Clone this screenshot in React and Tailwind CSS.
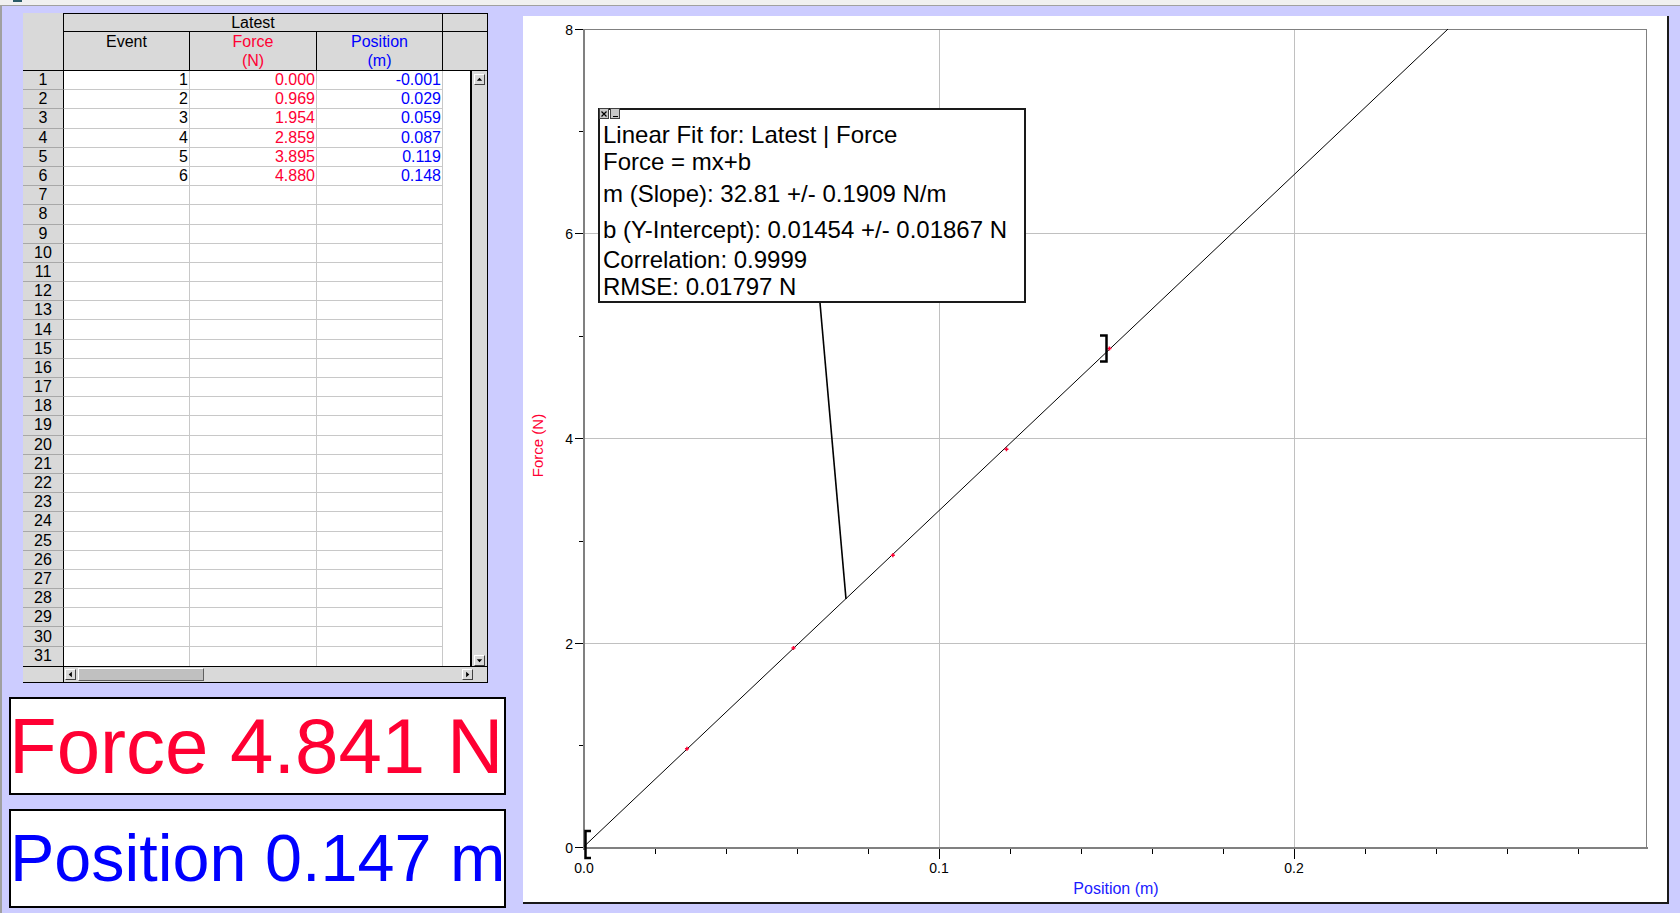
import React from "react";

const RED = "#ff0033";

const DATA = [
  [1, "0.000", "-0.001"],
  [2, "0.969", "0.029"],
  [3, "1.954", "0.059"],
  [4, "2.859", "0.087"],
  [5, "3.895", "0.119"],
  [6, "4.880", "0.148"],
];

function ArrowBtn({ dir }) {
  const d = {
    up: "M2 6.5 L5 3 L8 6.5 Z",
    down: "M2 3.5 L5 7 L8 3.5 Z",
    left: "M6.5 2 L3 5 L6.5 8 Z",
    right: "M3.5 2 L7 5 L3.5 8 Z",
  }[dir];
  return (
    <div className="w-[11px] h-[11px] shrink-0 bg-[#d9d9d9] border border-t-white border-l-white border-r-[#404040] border-b-[#404040] flex items-center justify-center">
      <svg width="9" height="9" viewBox="0 0 10 10">
        <path d={d} fill="black" />
      </svg>
    </div>
  );
}

function Table() {
  const rows = Array.from({ length: 31 }, (_, i) => i + 1);
  return (
    <div className="ml-[21px] mt-[7px] w-[465px] h-[670px] flex flex-col bg-[#d9d9d9] border-r border-b border-black text-[16px] text-black">
      {/* header */}
      <div className="flex h-[58px] border-b border-black shrink-0">
        <div className="w-[41px] border-r border-black" />
        <div className="flex-1 flex flex-col">
          <div className="flex h-[20px] border-t border-b border-black">
            <div className="w-[379px] border-r border-black flex items-center justify-center leading-none">
              Latest
            </div>
            <div className="flex-1" />
          </div>
          <div className="flex flex-1 leading-[19px] text-center">
            <div className="w-[126px] border-r border-black">Event</div>
            <div className="w-[127px] border-r border-black text-[#ff0033]">
              <div>Force</div>
              <div>(N)</div>
            </div>
            <div className="w-[126px] border-r border-black text-[#0000ff]">
              <div>Position</div>
              <div>(m)</div>
            </div>
            <div className="flex-1" />
          </div>
        </div>
      </div>
      {/* body */}
      <div className="flex h-[596px] border-b border-black shrink-0">
        <div className="w-[447px] flex flex-col">
          {rows.map((r) => {
            const d = DATA[r - 1];
            const last = r === 31;
            const rb = last ? "" : "border-b border-b-[#c8c8c8] ";
            return (
              <div key={r} className="flex flex-1 min-h-0">
                <div
                  className={
                    "w-[41px] border-r border-black flex items-center justify-center leading-none bg-[#d9d9d9] " +
                    (last ? "" : "border-b border-b-[#a8a8a8]")
                  }
                >
                  {r}
                </div>
                <div className="flex flex-1 bg-white leading-none">
                  <div className={rb + "w-[126px] border-r border-r-[#c8c8c8] flex items-center justify-end pr-[1px]"}>
                    {d ? d[0] : ""}
                  </div>
                  <div className={rb + "w-[127px] border-r border-r-[#c8c8c8] flex items-center justify-end pr-[1px] text-[#ff0033]"}>
                    {d ? d[1] : ""}
                  </div>
                  <div className={rb + "w-[126px] border-r border-r-[#c8c8c8] flex items-center justify-end pr-[1px] text-[#0000ff]"}>
                    {d ? d[2] : ""}
                  </div>
                  <div className="flex-1" />
                </div>
              </div>
            );
          })}
        </div>
        <div className="flex-1 border-l-2 border-black bg-[#d9d9d9] flex flex-col items-center justify-between pt-[3px] pb-0">
          <ArrowBtn dir="up" />
          <ArrowBtn dir="down" />
        </div>
      </div>
      {/* horizontal scrollbar */}
      <div className="flex flex-1">
        <div className="w-[41px] border-r border-black" />
        <div className="w-[409px] flex items-center pl-[1px]">
          <ArrowBtn dir="left" />
          <div className="ml-[2px] w-[126px] h-[13px] bg-[#c0c0c0] border border-t-white border-l-white border-r-[#606060] border-b-[#606060]" />
          <div className="flex-1" />
          <ArrowBtn dir="right" />
        </div>
        <div className="flex-1" />
      </div>
    </div>
  );
}

function Chart() {
  const X = (v) => 61 + v * 3550;
  const Y = (f) => 832 - f * 102.375;
  const pts = [
    [0.029, 0.969],
    [0.059, 1.954],
    [0.087, 2.859],
    [0.119, 3.895],
    [0.148, 4.88],
  ];
  const minorX = [1, 2, 3, 4, 6, 7, 8, 9, 11, 12, 13, 14];
  return (
    <svg width="1144" height="886" className="block" style={{ fontFamily: "'Liberation Sans', Arial, sans-serif" }}>
      {/* grid */}
      <g stroke="#c0c0c0" strokeWidth="1" shapeRendering="crispEdges">
        <line x1="416.5" y1="13" x2="416.5" y2="832" />
        <line x1="771.5" y1="13" x2="771.5" y2="832" />
        <line x1="61" y1="627.5" x2="1124" y2="627.5" />
        <line x1="61" y1="422.5" x2="1124" y2="422.5" />
        <line x1="61" y1="217.5" x2="1124" y2="217.5" />
      </g>
      {/* frame */}
      <g stroke="#808080" strokeWidth="1" shapeRendering="crispEdges">
        <line x1="61" y1="13.5" x2="1124" y2="13.5" />
        <line x1="1123.5" y1="13" x2="1123.5" y2="832" />
      </g>
      <rect x="60" y="13" width="2" height="821" fill="#808080" />
      <rect x="60" y="831" width="1065" height="2" fill="#808080" />
      {/* ticks */}
      <g stroke="black" strokeWidth="1" shapeRendering="crispEdges">
        {[831.5, 627.5, 422.5, 217.5, 13.5].map((y) => (
          <line key={y} x1="52" y1={y} x2="60" y2={y} />
        ))}
        {[729.5, 525.5, 320.5, 115.5].map((y) => (
          <line key={y} x1="56" y1={y} x2="60" y2={y} />
        ))}
        {minorX.map((k) => (
          <line key={k} x1={61.5 + 71 * k} y1="833" x2={61.5 + 71 * k} y2="838" />
        ))}
        {[5, 10].map((k) => (
          <line key={k} x1={61.5 + 71 * k} y1="833" x2={61.5 + 71 * k} y2="843" />
        ))}
      </g>
      <g fontSize="14" fill="black" textAnchor="end">
        <text x="50" y="837">0</text>
        <text x="50" y="633">2</text>
        <text x="50" y="428">4</text>
        <text x="50" y="223">6</text>
        <text x="50" y="19">8</text>
      </g>
      <g fontSize="14" fill="black" textAnchor="middle">
        <text x="61" y="857">0.0</text>
        <text x="416" y="857">0.1</text>
        <text x="771" y="857">0.2</text>
      </g>
      <text x="593" y="877.5" fontSize="16" fill="#1a1aff" textAnchor="middle">
        Position (m)
      </text>
      <text
        x="20"
        y="429.5"
        fontSize="15"
        fill={RED}
        textAnchor="middle"
        transform="rotate(-90 20 429.5)"
      >
        Force (N)
      </text>
      {/* fit line */}
      <line x1="61" y1={Y(0.01454)} x2={X((8 - 0.01454) / 32.81)} y2="13" stroke="black" strokeWidth="1" />
      {/* leader */}
      <line x1="297" y1="287" x2="323" y2="583" stroke="black" strokeWidth="1.6" />
      {/* points */}
      {pts.map(([x, f]) => {
        const px = X(x);
        const py = Y(f);
        return (
          <path
            key={x}
            d={`M${px - 2} ${py} H${px + 2} M${px} ${py - 2} V${py + 2}`}
            stroke={RED}
            strokeWidth="1.5"
          />
        );
      })}
      {/* brackets */}
      <path d="M68 815 H62.5 V842 H68" stroke="black" strokeWidth="2.5" fill="none" />
      <path d="M577 319.5 H583.5 V345.5 H577" stroke="black" strokeWidth="2.5" fill="none" />
    </svg>
  );
}

function FitBox() {
  return (
    <div className="absolute left-[75px] top-[92px] w-[428px] h-[195px] bg-white border-2 border-[#1a1a1a] pl-[3px] pt-[12px] text-[24px] leading-[26px] text-black whitespace-nowrap">
      <div className="absolute left-[-1px] top-[-2px] flex gap-[1px]">
        <div className="w-[10px] h-[11px] bg-[#c8c8c8] border border-[#404040] flex items-center justify-center">
          <svg width="8" height="8" viewBox="0 0 8 8">
            <path d="M1.5 1.5 L6.5 6.5 M6.5 1.5 L1.5 6.5" stroke="black" strokeWidth="1.2" />
          </svg>
        </div>
        <div className="w-[10px] h-[11px] bg-[#c8c8c8] border border-[#404040] flex items-end justify-center pb-[1px]">
          <div className="w-[5px] h-[1px] bg-black" />
        </div>
      </div>
      <div className="h-[27px]">Linear Fit for: Latest | Force</div>
      <div className="h-[32px]">Force = mx+b</div>
      <div className="h-[36px]">m (Slope): 32.81 +/- 0.1909 N/m</div>
      <div className="h-[30px]">b (Y-Intercept): 0.01454 +/- 0.01867 N</div>
      <div className="h-[27px]">Correlation: 0.9999</div>
      <div className="h-[26px]">RMSE: 0.01797 N</div>
    </div>
  );
}

export default function App() {
  return (
    <div className="w-[1680px] h-[913px] overflow-hidden bg-[#ccccff] flex flex-col font-['Liberation_Sans',Arial,sans-serif]">
      <div className="h-[6px] shrink-0 bg-[#f0f0f0] border-b border-[#a0a0a0] flex pl-[13px]">
        <div className="w-[9px] h-[2px] bg-[#2a5a66]" />
      </div>
      <div className="flex flex-1 border-l-2 border-[#a0a0a0]">
        <div className="w-[521px] shrink-0 flex flex-col">
          <Table />
          <div className="ml-[7px] mt-[14px] w-[497px] h-[98px] bg-white border-2 border-black pt-[8px] overflow-visible">
            <div className="ml-[-2px] text-[78px] leading-[78px] whitespace-nowrap text-[#ff0033]">
              Force 4.841 N
            </div>
          </div>
          <div className="ml-[7px] mt-[14px] w-[497px] h-[99px] bg-white border-2 border-black pt-[14px] overflow-visible">
            <div className="ml-[-1px] text-[66.5px] leading-[66.5px] whitespace-nowrap text-[#0000ff]">
              Position 0.147 m
            </div>
          </div>
        </div>
        <div className="relative mt-[10px] w-[1146px] h-[888px] shrink-0 bg-white border-r-2 border-b-2 border-[#1a1a1a]">
          <Chart />
          <FitBox />
        </div>
      </div>
    </div>
  );
}
